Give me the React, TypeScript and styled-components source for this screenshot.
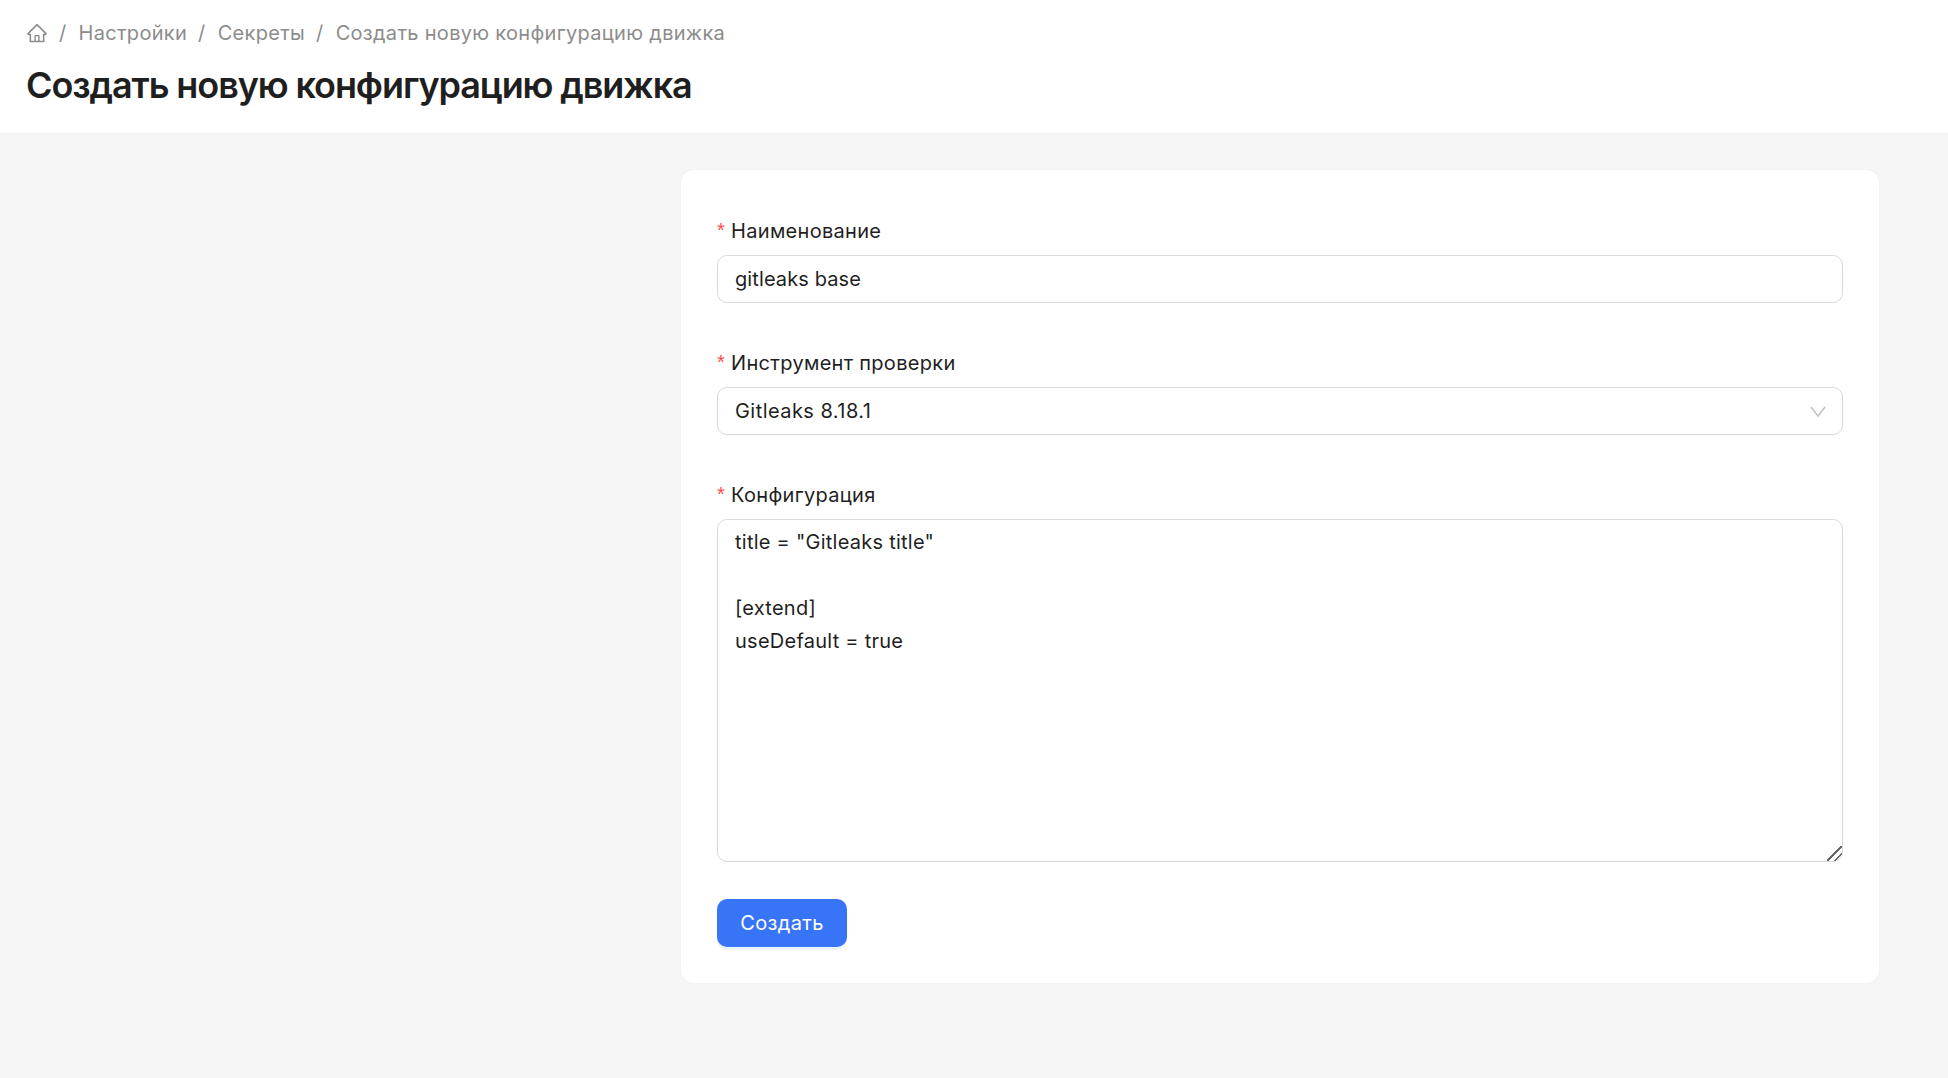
import * as React from 'react'
import styled, { createGlobalStyle } from 'styled-components'
import { AiOutlineHome } from 'react-icons/ai'

const GlobalStyle = createGlobalStyle`
    html, body {
        margin: 0;
        padding: 0;
        height: 100%;
        background: #f5f5f5;
    }
    body {
        font-family: Inter, "Noto Sans", sans-serif;
        color: #1f1f1f;
        overflow: hidden;
    }
    * {
        box-sizing: border-box;
    }
`

const Header = styled.header`
    height: 133px;
    background: #fff;
    padding: 19px 26px 0;
`

const Breadcrumbs = styled.nav`
    display: flex;
    align-items: center;
    height: 28px;
    font-size: 20px;
    line-height: 28px;
    letter-spacing: 0.3px;
    color: #8c8c8c;
`

const Separator = styled.span`
    margin: 0 12px 0 11px;
`

const HomeIcon = styled(AiOutlineHome)`
    width: 22px;
    height: 22px;
    display: block;
    flex: none;
    color: #8c8c8c;
`

const Title = styled.h1`
    margin: 16px 0 0;
    font-size: 36px;
    line-height: 44px;
    font-weight: 600;
    letter-spacing: -1.1px;
    color: #1f1f1f;
`

const Main = styled.main`
    display: grid;
    grid-template-columns: 1fr 1198px;
    padding: 37px 69px 0 0;
`

const Card = styled.form`
    grid-column: 2;
    display: flex;
    flex-direction: column;
    gap: 43px;
    background: #fff;
    border-radius: 12px;
    box-shadow: 0 0 1px rgba(0, 0, 0, 0.12);
    padding: 44px 36px 36px;
`

const Field = styled.div`
    display: flex;
    flex-direction: column;
`

const Label = styled.label`
    display: flex;
    align-items: center;
    height: 41px;
    padding-bottom: 8px;
    font-size: 20px;
    letter-spacing: 0.3px;
    color: #1f1f1f;
`

const Required = styled.span`
    color: #ff4d4f;
    font-size: 20px;
    margin-right: 6px;
    font-family: "Liberation Sans", sans-serif;
`

const controlStyles = `
    width: 100%;
    background: #fff;
    border: 1px solid #d9d9d9;
    border-radius: 10px;
    font-family: Inter, "Noto Sans", sans-serif;
    font-size: 20px;
    color: #1f1f1f;
    padding: 0 17px;
    outline: none;
`

const TextInput = styled.input`
    ${controlStyles}
    height: 48px;
    letter-spacing: 0.1px;
`

const SelectBox = styled.div`
    ${controlStyles}
    height: 48px;
    display: flex;
    align-items: center;
    justify-content: space-between;
    padding-right: 16px;
    letter-spacing: 0.45px;
`

const Chevron = styled.svg`
    width: 16px;
    height: 16px;
    display: block;
    color: #bfbfbf;
`

const TextArea = styled.textarea`
    ${controlStyles}
    display: block;
    height: 343px;
    padding-top: 6px;
    line-height: 33px;
    letter-spacing: 0.25px;
    resize: vertical;

    &::-webkit-resizer {
        background: linear-gradient(
            135deg,
            transparent 46%,
            #666 46%,
            #666 54%,
            transparent 54%,
            transparent 72%,
            #666 72%,
            #666 80%,
            transparent 80%
        );
    }
`

const Actions = styled.div`
    display: flex;
    margin-top: -6px;
`

const Button = styled.button`
    width: 130px;
    height: 48px;
    border: 0;
    border-radius: 10px;
    background: #3875f6;
    box-shadow: 0 3px 0 #ebf3ff;
    color: #fff;
    font-family: Inter, "Noto Sans", sans-serif;
    font-size: 20px;
    letter-spacing: 0.35px;
    cursor: pointer;
`

const CONFIG = `title = "Gitleaks title"

[extend]
useDefault = true`

const CRUMBS = ['Настройки', 'Секреты', 'Создать новую конфигурацию движка']

export default function App() {
    return (
        <>
            <GlobalStyle />
            <Header>
                <Breadcrumbs>
                    <HomeIcon />
                    {CRUMBS.map(crumb => (
                        <React.Fragment key={crumb}>
                            <Separator>/</Separator>
                            <span>{crumb}</span>
                        </React.Fragment>
                    ))}
                </Breadcrumbs>
                <Title>Создать новую конфигурацию движка</Title>
            </Header>
            <Main>
                <Card>
                    <Field>
                        <Label>
                            <Required>*</Required>Наименование
                        </Label>
                        <TextInput defaultValue="gitleaks base" />
                    </Field>
                    <Field>
                        <Label>
                            <Required>*</Required>Инструмент проверки
                        </Label>
                        <SelectBox>
                            Gitleaks 8.18.1
                            <Chevron viewBox="0 0 16 16" fill="none" stroke="currentColor" strokeWidth="1.4">
                                <path d="M1 4l7 9 7-9" />
                            </Chevron>
                        </SelectBox>
                    </Field>
                    <Field>
                        <Label>
                            <Required>*</Required>Конфигурация
                        </Label>
                        <TextArea defaultValue={CONFIG} spellCheck={false} />
                    </Field>
                    <Actions>
                        <Button type="button">Создать</Button>
                    </Actions>
                </Card>
            </Main>
        </>
    )
}
